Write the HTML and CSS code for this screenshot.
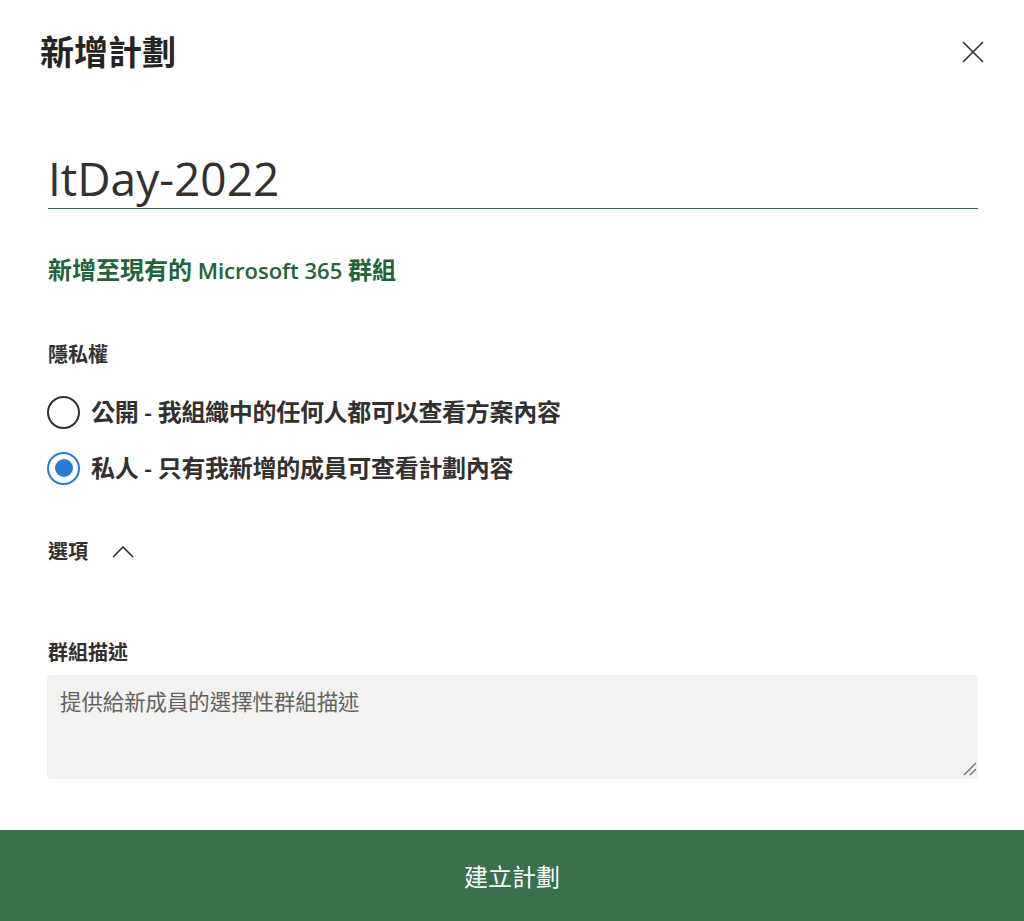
FILE: index.html
```html
<!DOCTYPE html>
<html lang="zh-Hant">
<head>
<meta charset="utf-8">
<title>新增計劃</title>
<link rel="stylesheet" href="styles.css">
</head>
<body>
<div class="dialog">
  <header class="dlg-header">
    <h1 class="dlg-title">新增計劃</h1>
    <button class="close-btn" aria-label="關閉">
      <svg width="22" height="22" viewBox="0 0 22 22"><path d="M1 1 L21 21 M21 1 L1 21" stroke="#323130" stroke-width="1.6" fill="none"/></svg>
    </button>
  </header>
  <main class="dlg-body">
    <div class="name-field"><span class="name-text">ItDay-2022</span></div>
    <a class="group-link" href="#">新增至現有的<span class="latin"> Microsoft 365 </span>群組</a>
    <section class="privacy">
      <div class="section-label">隱私權</div>
      <div class="radio-list">
        <label class="radio">
          <span class="radio-circle"></span>
          <span class="radio-text">公開 - 我組織中的任何人都可以查看方案內容</span>
        </label>
        <label class="radio checked">
          <span class="radio-circle"><span class="radio-dot"></span></span>
          <span class="radio-text">私人 - 只有我新增的成員可查看計劃內容</span>
        </label>
      </div>
    </section>
    <div class="options">
      <span class="section-label">選項</span>
      <svg class="chevron" width="22" height="12" viewBox="0 0 22 12"><path d="M1 11 L11 1 L21 11" stroke="#323130" stroke-width="1.6" fill="none"/></svg>
    </div>
    <section class="desc">
      <div class="section-label">群組描述</div>
      <div class="textarea">
        <span class="placeholder">提供給新成員的選擇性群組描述</span>
        <svg class="grip" width="14" height="14" viewBox="0 0 14 14"><path d="M13 1 L1 13 M13 7 L7 13" stroke="#6e6e6e" stroke-width="1.4" fill="none"/></svg>
      </div>
    </section>
  </main>
  <footer class="dlg-footer">
    <button class="create-btn">建立計劃</button>
  </footer>
</div>
</body>
</html>
```

FILE: styles.css
```css
* { box-sizing: border-box; }

html, body {
  margin: 0;
  padding: 0;
  background: #ffffff;
}

body {
  font-family: "Open Sans", "Noto Sans CJK TC", sans-serif;
  color: #323130;
}

.dialog {
  width: 1024px;
  height: 921px;
  display: flex;
  flex-direction: column;
  background: #ffffff;
}

.dlg-header {
  display: flex;
  align-items: center;
  justify-content: space-between;
  padding: 32px 31px 0 40px;
}

.dlg-title {
  margin: 0;
  font-size: 34px;
  line-height: 40px;
  font-weight: 700;
  color: #252423;
}

.close-btn {
  width: 40px;
  height: 40px;
  border: 0;
  background: transparent;
  padding: 0;
  display: flex;
  align-items: center;
  justify-content: center;
  cursor: pointer;
}

.dlg-body {
  flex: 1;
  display: flex;
  flex-direction: column;
  align-items: flex-start;
  padding: 0 46px 0 48px;
}

.name-field {
  align-self: stretch;
  margin-top: 78px;
  padding-bottom: 2px;
  border-bottom: 1.5px solid #2f7044;
}

.name-text {
  display: block;
  font-size: 46px;
  line-height: 56px;
  font-weight: 400;
  color: #323130;
}

.group-link {
  margin-top: 45px;
  font-size: 24px;
  line-height: 32px;
  font-weight: 600;
  color: #22643a;
  text-decoration: none;
}

.group-link .latin {
  font-size: 22px;
}

.section-label {
  font-size: 20px;
  line-height: 28px;
  font-weight: 600;
  color: #323130;
}

.privacy {
  margin-top: 55px;
}

.radio-list {
  margin-top: 26px;
  display: flex;
  flex-direction: column;
  gap: 22px;
}

.radio {
  display: flex;
  align-items: center;
  height: 34px;
  cursor: pointer;
}

.radio-circle {
  width: 33px;
  height: 33px;
  border-radius: 50%;
  border: 2px solid #323130;
  display: flex;
  align-items: center;
  justify-content: center;
  flex: none;
  margin-left: -1px;
}

.radio.checked .radio-circle {
  border-color: #2b7bd3;
}

.radio-dot {
  width: 18px;
  height: 18px;
  border-radius: 50%;
  background: #2b7bd3;
}

.radio-text {
  margin-left: 11px;
  font-size: 24px;
  line-height: 34px;
  font-weight: 600;
  letter-spacing: -0.3px;
  color: #323130;
}

.options {
  margin-top: 53px;
  display: flex;
  align-items: center;
}

.chevron {
  margin-left: 24px;
}

.desc {
  margin-top: 73px;
  align-self: stretch;
}

.textarea {
  position: relative;
  margin-top: 8px;
  height: 104px;
  margin-left: -1px;
  background: #f3f2f1;
  border-radius: 4px;
  padding: 12px 13px;
}

.placeholder {
  display: block;
  font-size: 21.4px;
  line-height: 29px;
  color: #646260;
}

.grip {
  position: absolute;
  right: 1px;
  bottom: 3px;
}

.dlg-footer {
  height: 91px;
  display: flex;
}

.create-btn {
  flex: 1;
  border: 0;
  margin: 0;
  background: #38714b;
  color: #ffffff;
  font-family: "Open Sans", "Noto Sans CJK TC", sans-serif;
  font-size: 24px;
  line-height: 32px;
  font-weight: 400;
  padding: 3px 0 0 0;
  cursor: pointer;
}
```
